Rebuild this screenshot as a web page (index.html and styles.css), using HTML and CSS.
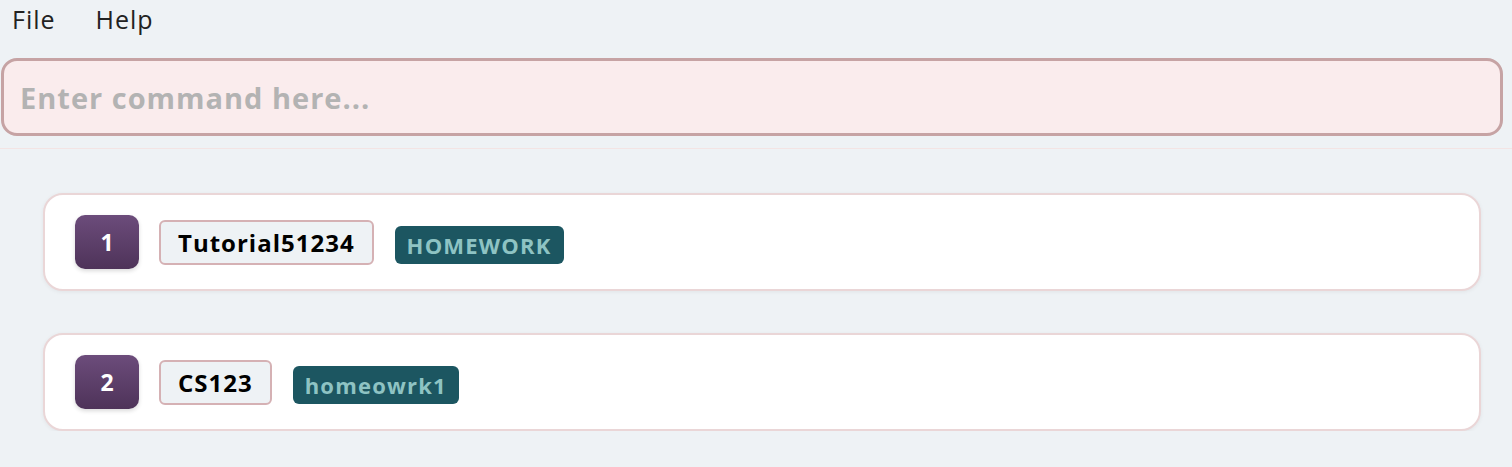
FILE: index.html
```html
<!DOCTYPE html>
<html>
<head>
<meta charset="utf-8">
<link rel="stylesheet" href="styles.css">
</head>
<body>
<div class="app">
  <nav class="menubar">
    <span class="menu-item">File</span>
    <span class="menu-item">Help</span>
  </nav>
  <div class="command-pane">
    <div class="command-box">
      <span class="placeholder">Enter command here...</span>
    </div>
  </div>
  <div class="divider"></div>
  <div class="list">
    <div class="card">
      <div class="index">1</div>
      <div class="name">Tutorial51234</div>
      <div class="tags"><span class="tag">HOMEWORK</span></div>
    </div>
    <div class="card">
      <div class="index">2</div>
      <div class="name">CS123</div>
      <div class="tags"><span class="tag">homeowrk1</span></div>
    </div>
  </div>
</div>
</body>
</html>
```

FILE: styles.css
```css
html, body {
  margin: 0;
  padding: 0;
  background: #eef2f5;
  font-family: "Open Sans", "Lato", sans-serif;
  overflow: hidden;
}

.app {
  display: flex;
  flex-direction: column;
}

.menubar {
  display: flex;
  height: 40px;
  align-items: center;
  padding-left: 12px;
  gap: 40px;
}

.menu-item {
  font-size: 25px;
  letter-spacing: 1px;
  color: #222;
  font-weight: 400;
  line-height: 1;
  margin-top: -2px;
}

.command-pane {
  padding: 18px 9px 12px 1px;
}

.command-box {
  height: 72px;
  border: 3px solid #c6a3a4;
  border-radius: 16px;
  background: #faeced;
  display: flex;
  align-items: center;
  padding-left: 16px;
}

.placeholder {
  font-size: 29px;
  letter-spacing: 1px;
  font-weight: 700;
  color: #b3b3b3;
}

.divider {
  height: 1px;
  background: #f3e4e4;
}

.list {
  display: flex;
  flex-direction: column;
  gap: 42px;
  padding: 44px 31px 0 43px;
}

.card {
  box-sizing: border-box;
  height: 98px;
  background: #fff;
  border: 2px solid #ead6d7;
  border-radius: 20px;
  box-shadow: 0 1px 4px rgba(0, 0, 0, 0.06);
  display: flex;
  align-items: center;
  padding-left: 30px;
  gap: 20px;
}

.index {
  width: 64px;
  height: 54px;
  border-radius: 10px;
  background: linear-gradient(#6c4c7b, #4e3359);
  color: #fff;
  font-weight: 700;
  font-size: 23px;
  display: flex;
  align-items: center;
  justify-content: center;
  box-shadow: 0 2px 4px rgba(0, 0, 0, 0.15);
}

.name {
  height: 41px;
  border: 2px solid #d5b1b4;
  border-radius: 6px;
  background: #eef2f5;
  padding: 0 17px;
  display: flex;
  align-items: center;
  font-weight: 700;
  font-size: 24px;
  letter-spacing: 1px;
  color: #000;
}

.tags {
  display: flex;
  gap: 8px;
  margin-top: 5px;
  margin-left: 1px;
}

.tag {
  height: 38px;
  border-radius: 6px;
  background: #1c5661;
  color: #8ec3c3;
  font-weight: 700;
  font-size: 22px;
  letter-spacing: 1.2px;
  padding: 0 12px;
  display: flex;
  align-items: center;
}
```
